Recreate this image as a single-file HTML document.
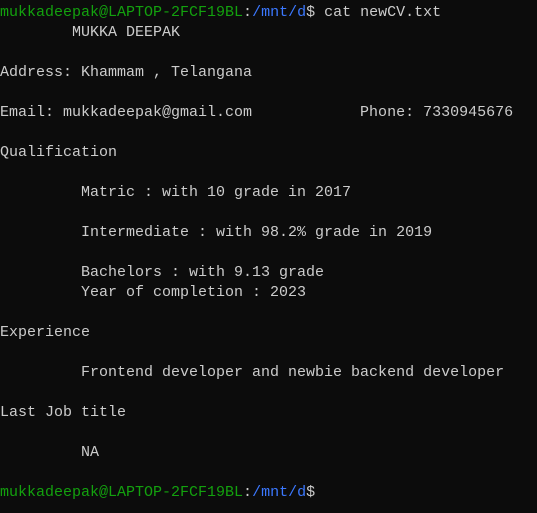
<!DOCTYPE html>
<html><head><style>
html,body{margin:0;padding:0;background:#0c0c0c;width:537px;height:513px;overflow:hidden}
pre{margin:0;padding:3px 0 0 0;font-family:"Liberation Mono",monospace;font-size:15px;line-height:20px;color:#cccccc;white-space:pre}
.g{color:#13a10e}.b{color:#3b78ff}
</style></head><body><pre><span class="g">mukkadeepak@LAPTOP-2FCF19BL</span>:<span class="b">/mnt/d</span>$ cat newCV.txt
        MUKKA DEEPAK

Address: Khammam , Telangana

Email: mukkadeepak@gmail.com            Phone: 7330945676

Qualification

         Matric : with 10 grade in 2017

         Intermediate : with 98.2% grade in 2019

         Bachelors : with 9.13 grade
         Year of completion : 2023

Experience

         Frontend developer and newbie backend developer

Last Job title

         NA

<span class="g">mukkadeepak@LAPTOP-2FCF19BL</span>:<span class="b">/mnt/d</span>$</pre></body></html>
